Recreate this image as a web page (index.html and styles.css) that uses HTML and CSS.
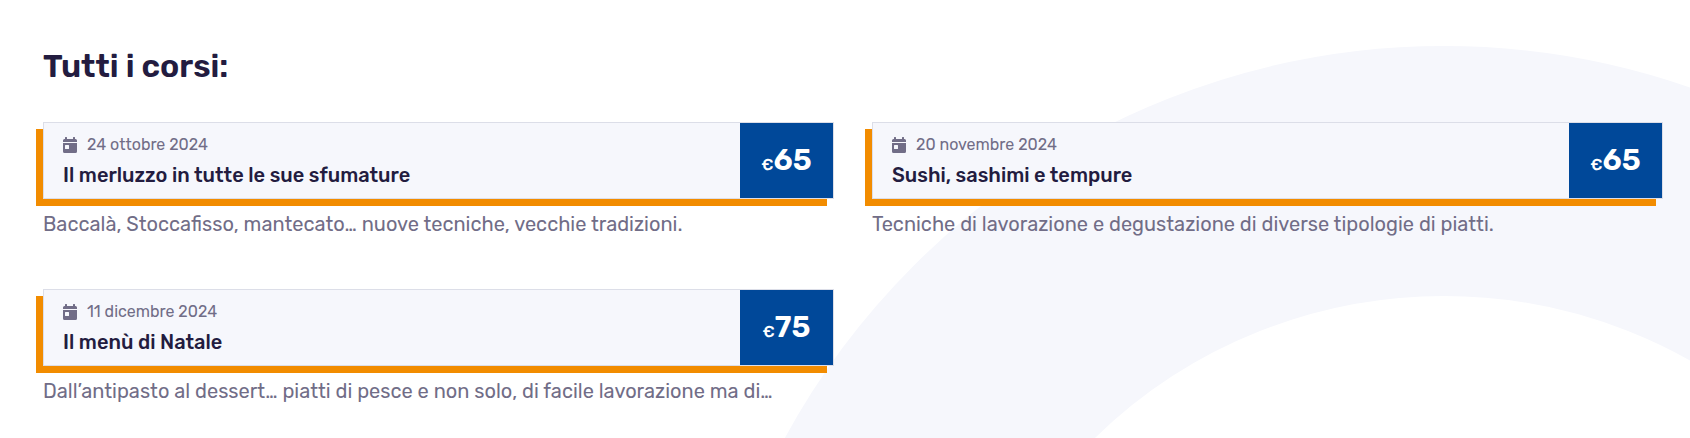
FILE: index.html
```html
<!DOCTYPE html>
<html lang="it">
<head>
<meta charset="utf-8">
<meta name="viewport" content="width=device-width, initial-scale=1">
<title>Tutti i corsi</title>
<link rel="stylesheet" href="styles.css">
</head>
<body>
<svg width="0" height="0" class="sprite" aria-hidden="true">
  <symbol id="calendar" viewBox="0 0 14 16">
    <path fill="currentColor" fill-rule="evenodd" d="M0 5V3.500Q0 2 1.500 2H2V.5Q2 0 2.500 0H3.500Q4 0 4 .5V2H10V.5Q10 0 10.500 0H11.500Q12 0 12 .5V2H12.500Q14 2 14 3.500V5ZM0 6H14V14.500Q14 16 12.500 16H1.500Q0 16 0 14.500ZM2.500 8Q2 8 2 8.500V11.500Q2 12 2.500 12H5.500Q6 12 6 11.500V8.500Q6 8 5.500 8Z"/>
  </symbol>
</svg>
<main class="courses">
  <h2 class="heading">Tutti i corsi:</h2>
  <div class="grid">
    <article class="course">
      <div class="card">
        <div class="info">
          <time class="date" datetime="2024-10-24"><svg class="icon" aria-hidden="true"><use href="#calendar"/></svg>24 ottobre 2024</time>
          <h3 class="title">Il merluzzo in tutte le sue sfumature</h3>
        </div>
        <p class="price"><span class="currency">€</span>65</p>
      </div>
      <p class="description">Baccalà, Stoccafisso, mantecato… nuove tecniche, vecchie tradizioni.</p>
    </article>
    <article class="course">
      <div class="card">
        <div class="info">
          <time class="date" datetime="2024-11-20"><svg class="icon" aria-hidden="true"><use href="#calendar"/></svg>20 novembre 2024</time>
          <h3 class="title">Sushi, sashimi e tempure</h3>
        </div>
        <p class="price"><span class="currency">€</span>65</p>
      </div>
      <p class="description">Tecniche di lavorazione e degustazione di diverse tipologie di piatti.</p>
    </article>
    <article class="course">
      <div class="card">
        <div class="info">
          <time class="date" datetime="2024-12-11"><svg class="icon" aria-hidden="true"><use href="#calendar"/></svg>11 dicembre 2024</time>
          <h3 class="title">Il menù di Natale</h3>
        </div>
        <p class="price"><span class="currency">€</span>75</p>
      </div>
      <p class="description">Dall’antipasto al dessert… piatti di pesce e non solo, di facile lavorazione ma di…</p>
    </article>
  </div>
</main>
</body>
</html>
```

FILE: styles.css
```css
*,
*::before {
  box-sizing: border-box;
}

body {
  margin: 0;
  background: #fff;
  color: #231c40;
  font-family: Rubik, Inter, sans-serif;
}

h2, h3, p {
  margin: 0;
}

.sprite {
  position: absolute;
}

.courses {
  position: relative;
  overflow: hidden;
  min-height: 100vh;
  padding: 45px 27px 32px 43px;
}

/* Large decorative ring behind the list */
.courses::before {
  content: "";
  position: absolute;
  z-index: -1;
  top: 46px;
  right: -504px;
  width: 1500px;
  height: 1500px;
  border: 250px solid #f6f7fc;
  border-radius: 50%;
}

.heading {
  margin-bottom: 35px;
  font-size: 32px;
  line-height: 42px;
  font-weight: 600;
}

.grid {
  display: grid;
  grid-template-columns: repeat(2, minmax(0, 1fr));
  gap: 51px 38px;
}

.card {
  display: flex;
  border: 1px solid #dcdee8;
  background: #f6f7fc;
  box-shadow: -7px 7px 0 #f28c00;
}

.info {
  flex: 1;
  min-width: 0;
  padding: 8px 19px 6px;
}

.date {
  display: flex;
  align-items: center;
  gap: 10px;
  color: #716d87;
  font-size: 16px;
  line-height: 28px;
}

.icon {
  width: 14px;
  height: 16px;
}

.title {
  font-size: 20px;
  line-height: 33px;
  font-weight: 500;
}

.price {
  display: flex;
  align-items: baseline;
  justify-content: center;
  width: 93px;
  background: #004899;
  color: #fff;
  font-size: 30px;
  line-height: 75px;
  font-weight: 600;
}

.currency {
  font-size: 16px;
  line-height: 16px;
  font-weight: 500;
}

.description {
  padding-top: 11px;
  overflow: hidden;
  color: #716d87;
  font-size: 20px;
  line-height: 28px;
  text-overflow: ellipsis;
  white-space: nowrap;
}
```
